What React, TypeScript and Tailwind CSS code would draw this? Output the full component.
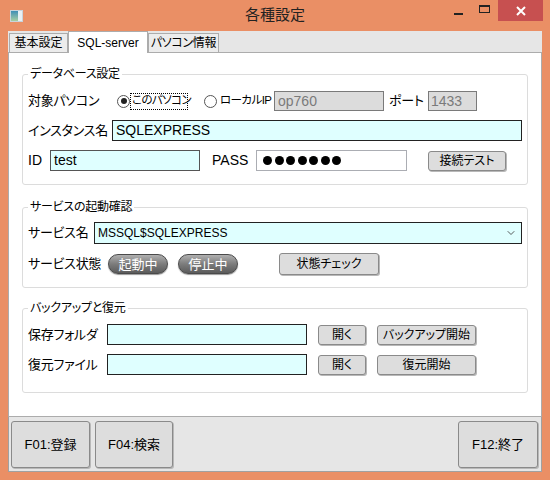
import { ChevronDown } from 'lucide-react';

const font = "font-['Liberation_Sans','Noto_Sans_CJK_JP',sans-serif] [font-feature-settings:'palt']";

function WinButton({ label, className = '' }: { label: string; className?: string }) {
  return (
    <button
      className={`flex shrink-0 items-center justify-center rounded-[3px] border border-[#8a8a8a] bg-[#dddddd] text-[12px] leading-none text-black shadow-[1px_1px_0_#b8b8b8] ${className}`}
    >
      {label}
    </button>
  );
}

function Pill({ label }: { label: string }) {
  return (
    <div className="flex h-[20px] w-[60px] shrink-0 items-center justify-center rounded-full border border-[#4a4a4a] bg-gradient-to-b from-[#b0b0b0] via-[#7c7c7c] to-[#5c5c5c] text-[13px] leading-none text-white shadow-[0_1px_1px_#999]">
      {label}
    </div>
  );
}

function Radio({ checked }: { checked?: boolean }) {
  return (
    <span className="flex h-[13px] w-[13px] shrink-0 items-center justify-center rounded-full border border-[#555] bg-white">
      {checked ? <span className="h-[6px] w-[6px] rounded-full bg-[#222]" /> : null}
    </span>
  );
}

function Label({ text, className = '' }: { text: string; className?: string }) {
  return <span className={`shrink-0 whitespace-nowrap text-[13px] tracking-[-0.02em] ${className}`}>{text}</span>;
}

function Group({ title, children, className = '' }: { title: string; children: React.ReactNode; className?: string }) {
  return (
    <fieldset className={`rounded-[3px] border border-[#dcdcdc] px-[5px] ${className}`}>
      <legend className="px-[2px] text-[12px] leading-[14px] tracking-[-0.02em] text-black">{title}</legend>
      {children}
    </fieldset>
  );
}

export default function App() {
  return (
    <div className={`flex h-[480px] w-[550px] flex-col bg-[#ea8f65] text-black ${font}`}>
      {/* title bar */}
      <div className="grid h-[31px] grid-cols-[1fr_auto_1fr]">
        <div className="flex items-center pl-[10px]">
          <div className="flex h-[12px] w-[13px] border border-[#c8d4dc] bg-white">
            <div className="h-full w-[7px] bg-gradient-to-b from-[#3e8fb5] to-[#a6cfa0]" />
            <div className="h-full flex-1 bg-[#e8f0f4]" />
          </div>
        </div>
        <div className="flex items-center text-[15px] text-[#222]">各種設定</div>
        <div className="flex items-start justify-end pr-[7px]">
          <div className="flex h-[21px] w-[26px] items-center justify-center">
            <div className="mt-[6px] h-[2px] w-[9px] bg-[#222]" />
          </div>
          <div className="flex h-[21px] w-[27px] items-center justify-center">
            <div className="mb-[4px] h-[8px] w-[11px] border border-t-2 border-[#222]" />
          </div>
          <div className="flex h-[21px] w-[45px] items-center justify-center bg-[#c75050]">
            <svg width="10" height="10" viewBox="0 0 10 10">
              <path d="M1 1 L9 9 M9 1 L1 9" stroke="white" strokeWidth="2" />
            </svg>
          </div>
        </div>
      </div>

      {/* client */}
      <div className="mx-[8px] mb-[8px] flex flex-1 flex-col bg-[#e6e6e6]">
        <div className="relative z-10 flex h-[21px] items-end pl-[1px] text-[12px] leading-none">
          <div className="flex h-[19px] w-[59px] items-center justify-center border border-b-0 border-[#acacac] bg-[#ececec]">基本設定</div>
          <div className="-mb-px flex h-[22px] w-[80px] items-center justify-center border border-b-0 border-[#acacac] bg-white">SQL-server</div>
          <div className="flex h-[19px] w-[71px] items-center justify-center border border-b-0 border-[#acacac] bg-[#ececec] tracking-[-0.03em]">パソコン情報</div>
        </div>

        <div className="flex h-[365px] flex-col border border-[#acacac] bg-white px-[13px] pt-[14px]">
          <Group title="データベース設定" className="pb-[13px]">
            <div className="flex flex-col gap-[9px] pt-[10px] text-[14px]">
              <div className="flex h-[20px] items-center">
                <Label text="対象パソコン" className="w-[89px]" />
                <Radio checked />
                <span className="flex h-[17px] w-[58px] shrink-0 items-center whitespace-nowrap border border-dotted border-black pl-[1px] text-[11.5px] tracking-[-0.05em]">このパソコン</span>
                <span className="ml-[16px]">
                  <Radio />
                </span>
                <span className="w-[57px] shrink-0 whitespace-nowrap pl-[3px] text-[11.5px] tracking-[-0.05em]">ローカルIP</span>
                <div className="flex h-[20px] w-[110px] shrink-0 items-center border border-[#7a7a7a] bg-[#dcdcdc] px-[3px] text-[#7a7a7a]">op760</div>
                <Label text="ポート" className="w-[44px] pl-[5px]" />
                <div className="flex h-[20px] w-[49px] shrink-0 items-center border border-[#7a7a7a] bg-[#dcdcdc] px-[2px] text-[#7a7a7a]">1433</div>
              </div>
              <div className="flex h-[21px] items-center">
                <Label text="インスタンス名" className="w-[84px]" />
                <div className="flex h-[21px] flex-1 items-center border border-[#222] bg-[#dfffff] px-[3px]">SQLEXPRESS</div>
              </div>
              <div className="flex h-[21px] items-center">
                <span className="w-[22px] shrink-0">ID</span>
                <div className="flex h-[21px] w-[150px] shrink-0 items-center border border-[#555] bg-[#dfffff] px-[3px]">test</div>
                <span className="w-[56px] shrink-0 pl-[12px]">PASS</span>
                <div className="flex h-[21px] w-[151px] shrink-0 items-center gap-[2.5px] border border-[#abadb3] bg-white px-[6px]">
                  {Array.from({ length: 7 }).map((_, i) => (
                    <span key={i} className="h-[9px] w-[9px] rounded-full bg-black" />
                  ))}
                </div>
                <WinButton label="接続テスト" className="ml-[21px] h-[20px] w-[78px]" />
              </div>
            </div>
          </Group>

          <Group title="サービスの起動確認" className="mt-[15px] pb-[12px]">
            <div className="flex flex-col gap-[9px] pt-[8px] text-[14px]">
              <div className="flex h-[22px] items-center">
                <Label text="サービス名" className="w-[66px]" />
                <div className="flex h-[22px] flex-1 items-center justify-between border border-[#222] bg-[#dfffff] pl-[3px] pr-[4px] text-[12px]">
                  <span>MSSQL$SQLEXPRESS</span>
                  <ChevronDown className="h-[12px] w-[12px] text-[#444]" strokeWidth={1.75} />
                </div>
              </div>
              <div className="flex h-[22px] items-center">
                <Label text="サービス状態" className="w-[80px]" />
                <Pill label="起動中" />
                <span className="ml-[10px]">
                  <Pill label="停止中" />
                </span>
                <WinButton label="状態チェック" className="ml-[41px] h-[22px] w-[100px]" />
              </div>
            </div>
          </Group>

          <Group title="バックアップと復元" className="mt-[13px] pb-[17px]">
            <div className="flex flex-col gap-[9px] pt-[9px] text-[14px]">
              <div className="flex h-[21px] items-center">
                <Label text="保存フォルダ" className="w-[79px]" />
                <div className="h-[21px] w-[200px] shrink-0 border border-[#222] bg-[#dfffff]" />
                <WinButton label="開く" className="ml-[11px] h-[20px] w-[48px]" />
                <WinButton label="バックアップ開始" className="ml-[11px] h-[20px] w-[99px]" />
              </div>
              <div className="flex h-[21px] items-center">
                <Label text="復元ファイル" className="w-[79px]" />
                <div className="h-[21px] w-[200px] shrink-0 border border-[#222] bg-[#dfffff]" />
                <WinButton label="開く" className="ml-[11px] h-[20px] w-[48px]" />
                <WinButton label="復元開始" className="ml-[11px] h-[20px] w-[99px]" />
              </div>
            </div>
          </Group>
        </div>

        <div className="flex flex-1 items-center border-x border-b border-[#a0a0a0] px-[2px]">
          <div className="flex w-full items-center">
            <WinButton label="F01:登録" className="h-[47px] w-[79px] text-[13px]" />
            <WinButton label="F04:検索" className="ml-[5px] h-[47px] w-[78px] text-[13px]" />
            <div className="flex-1" />
            <WinButton label="F12:終了" className="mr-[1px] h-[47px] w-[80px] text-[13px]" />
          </div>
        </div>
      </div>
    </div>
  );
}
